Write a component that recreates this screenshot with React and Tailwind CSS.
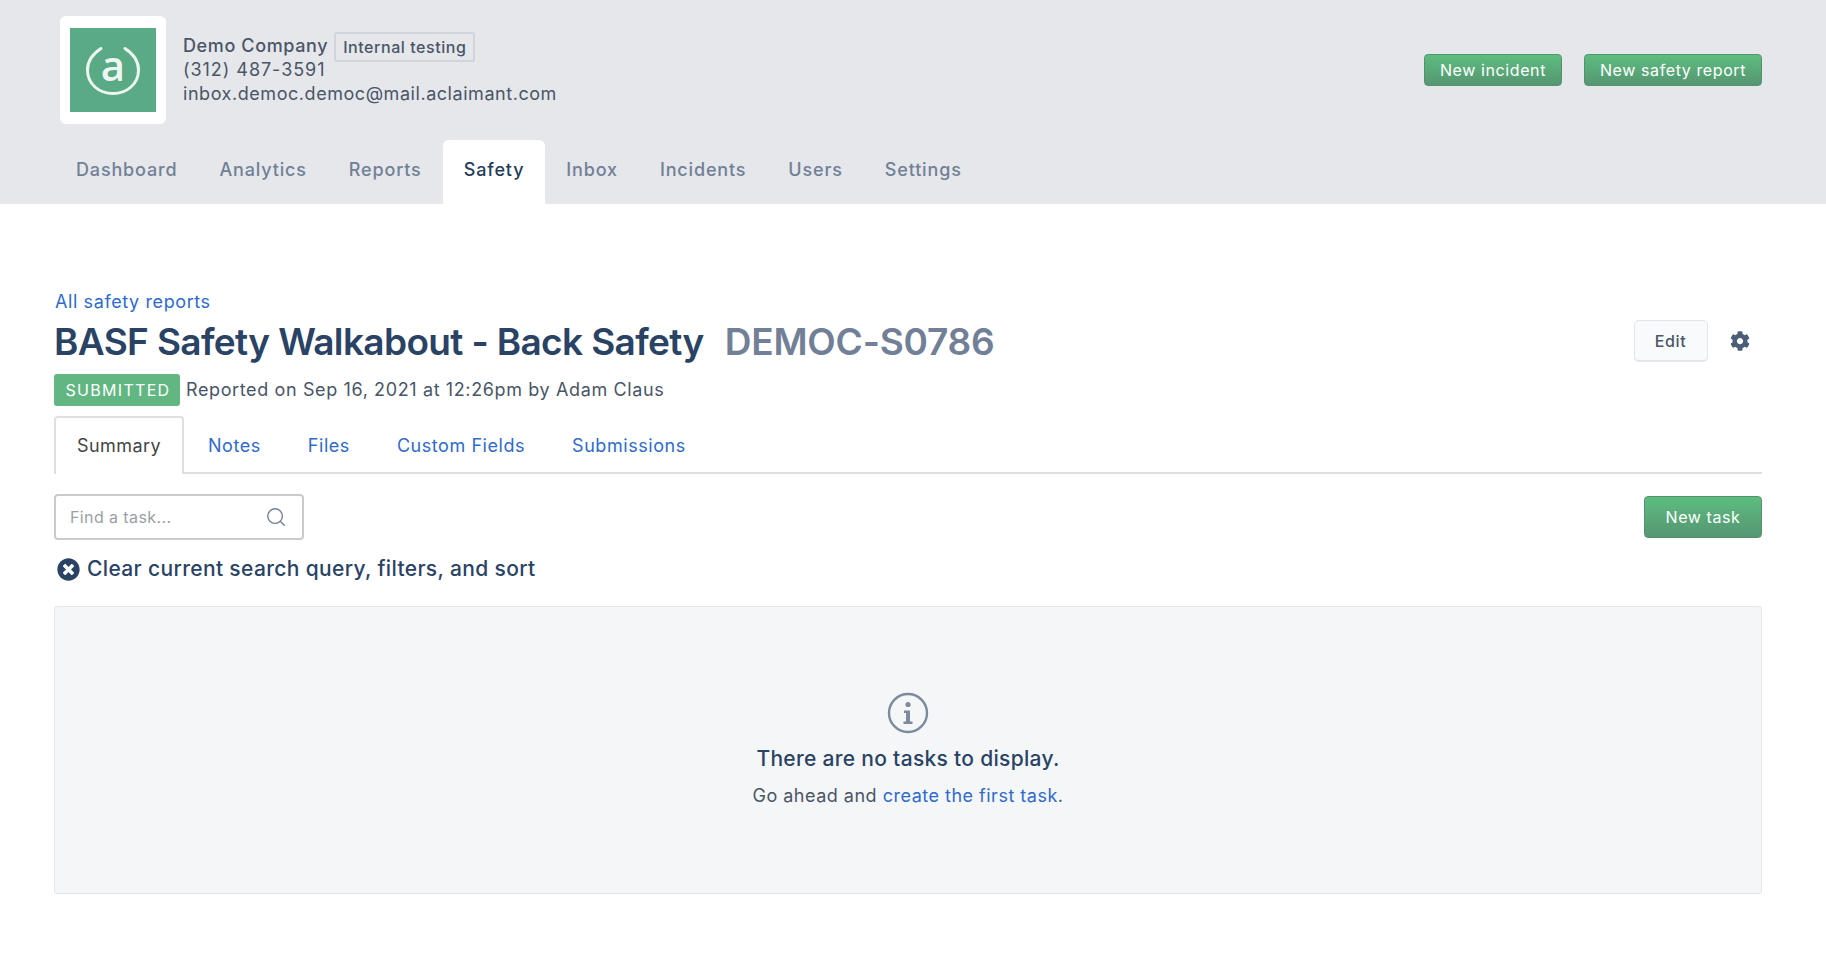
import { Search } from "lucide-react";

const navItems = ["Dashboard", "Analytics", "Reports", "Safety", "Inbox", "Incidents", "Users", "Settings"];
const subTabs = ["Notes", "Files", "Custom Fields", "Submissions"];

function GreenButton({ children, className }) {
  return (
    <button className={`flex items-center justify-center rounded-[4px] border border-[#52926f] bg-gradient-to-b from-[#5dbd7e] to-[#559672] pb-[1px] text-white tracking-[0.6px] ${className}`}>
      {children}
    </button>
  );
}

function Logo() {
  return (
    <div className="flex h-[108px] w-[106px] items-center justify-center rounded-[6px] bg-white">
      <div className="flex h-[84px] w-[86px] items-center justify-center bg-[#5aaa85] pt-[2px]">
        <svg className="overflow-visible" width="54" height="48" viewBox="0 0 54 48" fill="none">
          <path d="M15 1.5 C5 8 1.5 16 1.5 23 C1.5 37 13 46.5 27 46.5 C41 46.5 52.5 37 52.5 23 C52.5 16 49 8 39 1.5" stroke="#eef6f2" strokeWidth="3" strokeLinecap="round" />
          <text x="27" y="34" textAnchor="middle" fontSize="42" fontWeight="600" fill="#eef6f2" fontFamily="Open Sans, sans-serif">a</text>
        </svg>
      </div>
    </div>
  );
}

export default function App() {
  return (
    <div className="min-h-screen bg-white [font-family:Inter,sans-serif] text-[#4a5568]">
      <header className="h-[204px] bg-[#e5e7eb] pl-[54px] pr-[64px]">
        <div className="flex h-[140px] items-start justify-between">
          <div className="flex pl-[6px] pt-[16px]">
            <Logo />
            <div className="pl-[17px] pt-[14px] text-[18px] leading-[24px] tracking-[0.55px]">
              <div className="flex items-center">
                <span className="font-medium tracking-[0.62px]">Demo Company</span>
                <span className="ml-[6px] mt-[2px] rounded-[3px] border-2 border-[#cfd4dd] px-[7px] text-[16px] leading-[26px] font-medium">Internal testing</span>
              </div>
              <div className="-mt-[4px] tracking-[0.95px]">(312) 487-3591</div>
              <div>inbox.democ.democ@mail.aclaimant.com</div>
            </div>
          </div>
          <div className="flex gap-[22px] pt-[54px]">
            <GreenButton className="h-[32px] w-[138px] text-[16px]">New incident</GreenButton>
            <GreenButton className="h-[32px] w-[178px] text-[16px]">New safety report</GreenButton>
          </div>
        </div>
        <nav className="ml-[1px] flex h-[64px]">
          {navItems.map((item) =>
            item === "Safety" ? (
              <a key={item} className="flex items-center rounded-t-[6px] bg-white px-[21px] pb-[5px] text-[18px] font-medium tracking-[0.84px] text-[#243b5a]">
                {item}
              </a>
            ) : (
              <a key={item} className="flex items-center px-[21px] pb-[5px] text-[18px] font-medium tracking-[0.84px] text-[#718096]">
                {item}
              </a>
            )
          )}
        </nav>
      </header>

      <main className="pl-[54px] pr-[64px] pt-[86px]">
        <div className="flex items-start justify-between">
          <div>
            <a className="block pl-[1px] text-[18px] leading-[24px] tracking-[0.6px] text-[#2f6bc9]">All safety reports</a>
            <h1 className="mt-[5px] flex text-[37px] leading-[46px] font-semibold tracking-[-0.63px] text-[#2a4365]">
              BASF Safety Walkabout - Back Safety
              <span className="ml-[21px] tracking-[-0.2px] text-[#718096]">DEMOC-S0786</span>
            </h1>
          </div>
          <div className="flex items-center gap-[22.5px] pr-[12px] pt-[30px]">
            <button className="h-[42px] w-[74px] rounded-[5px] border border-[#e2e5ea] border-b-2 bg-[#f9fafb] text-[16px] font-medium tracking-[0.6px]">Edit</button>
            <svg width="20" height="20" viewBox="0 0 512 512" fill="#4a5e78">
              <path d="M487.4 315.7l-42.6-24.6c4.3-23.2 4.3-47 0-70.2l42.6-24.6c4.9-2.8 7.1-8.6 5.5-14-11.1-35.6-30-67.8-54.7-94.6-3.8-4.1-10-5.1-14.8-2.3L380.8 110c-17.9-15.4-38.5-27.3-60.8-35.1V25.8c0-5.6-3.9-10.5-9.4-11.7-36.7-8.2-74.3-7.8-109.2 0-5.5 1.2-9.4 6.1-9.4 11.7V75c-22.2 7.9-42.8 19.8-60.8 35.1L88.7 85.5c-4.9-2.8-11-1.9-14.8 2.3-24.7 26.7-43.6 58.9-54.7 94.6-1.7 5.4.6 11.2 5.5 14L67.3 221c-4.3 23.2-4.3 47 0 70.2l-42.6 24.6c-4.9 2.8-7.1 8.6-5.5 14 11.1 35.6 30 67.8 54.7 94.6 3.8 4.1 10 5.1 14.8 2.3l42.6-24.6c17.9 15.4 38.5 27.3 60.8 35.1v49.2c0 5.6 3.9 10.5 9.4 11.7 36.7 8.2 74.3 7.8 109.2 0 5.5-1.2 9.4-6.1 9.4-11.7v-49.2c22.2-7.9 42.8-19.8 60.8-35.1l42.6 24.6c4.9 2.8 11 1.9 14.8-2.3 24.7-26.7 43.6-58.9 54.7-94.6 1.5-5.5-.7-11.3-5.6-14.1zM256 336c-44.1 0-80-35.9-80-80s35.9-80 80-80 80 35.9 80 80-35.9 80-80 80z" />
            </svg>
          </div>
        </div>

        <div className="mt-[9px] flex items-center">
          <span className="flex h-[32px] w-[126px] items-center justify-center rounded-[3px] bg-[#62b682] pl-[2px] text-[16px] tracking-[1.3px] text-white">SUBMITTED</span>
          <span className="mb-[2px] ml-[6px] text-[18px] tracking-[0.62px]">Reported on Sep 16, 2021 at 12:26pm by Adam Claus</span>
        </div>

        <div className="mt-[10px] flex h-[58px] border-b-2 border-[#dedfe1]">
          <a className="-mb-[2px] flex h-[58px] w-[130px] items-center justify-center rounded-t-[4px] border-2 border-b-0 border-[#dedfe1] bg-white pb-[2px] text-[18px] tracking-[0.45px] text-[#444]">Summary</a>
          <div className="flex gap-[47px] pl-[24px] pt-[2px]">
            {subTabs.map((t) => (
              <a key={t} className="flex items-center text-[18px] tracking-[0.55px] text-[#2f6bc9]">{t}</a>
            ))}
          </div>
        </div>

        <div className="mt-[20px] flex items-start justify-between">
          <div className="flex h-[46px] w-[250px] items-center justify-between rounded-[4px] border-2 border-[#cbcbcb] pl-[14px] pr-[15px]">
            <span className="text-[16px] tracking-[0.4px] text-[#9b9fa5]">Find a task...</span>
            <Search size={22} strokeWidth={1.5} className="text-[#718096]" />
          </div>
          <GreenButton className="mt-[2px] h-[42px] w-[118px] text-[16px]">New task</GreenButton>
        </div>

        <button className="mt-[13px] flex h-[32px] items-center text-[21px] font-medium tracking-[0.35px] text-[#2a4365]">
          <svg className="ml-[3px] mr-[7px]" width="23" height="23" viewBox="0 0 512 512" fill="#2a4365">
            <path d="M256 8C119 8 8 119 8 256s111 248 248 248 248-111 248-248S393 8 256 8zm121.6 313.1c4.7 4.7 4.7 12.3 0 17L338 377.6c-4.7 4.7-12.3 4.7-17 0L256 312l-65.1 65.6c-4.7 4.7-12.3 4.7-17 0L134.4 338c-4.7-4.7-4.7-12.3 0-17l65.6-65-65.6-65.1c-4.7-4.7-4.7-12.3 0-17l39.6-39.6c4.7-4.7 12.3-4.7 17 0l65 65.7 65.1-65.6c4.7-4.7 12.3-4.7 17 0l39.6 39.6c4.7 4.7 4.7 12.3 0 17L312 256l65.6 65.1z" />
          </svg>
          Clear current search query, filters, and sort
        </button>

        <section className="mt-[21px] flex h-[288px] flex-col items-center rounded-[3px] border border-[#e3e5e8] bg-[#f5f6f7] pt-[85px]">
          <svg width="42" height="42" viewBox="0 0 42 42" fill="none">
            <circle cx="21" cy="21" r="19" stroke="#7c8a9c" strokeWidth="2.4" />
            <circle cx="21" cy="12.5" r="2.6" fill="#7c8a9c" />
            <path d="M17 18.5h6v11h2.5v2.5h-9v-2.5H19v-8.5h-2z" fill="#7c8a9c" />
          </svg>
          <div className="mt-[9px] text-[21px] leading-[32px] font-medium tracking-[0.3px] text-[#2a4365]">There are no tasks to display.</div>
          <div className="mt-[8px] text-[18px] leading-[26px] tracking-[0.5px]">
            Go ahead and <a className="text-[#2f6bc9]">create the first task</a>.
          </div>
        </section>
      </main>
    </div>
  );
}
